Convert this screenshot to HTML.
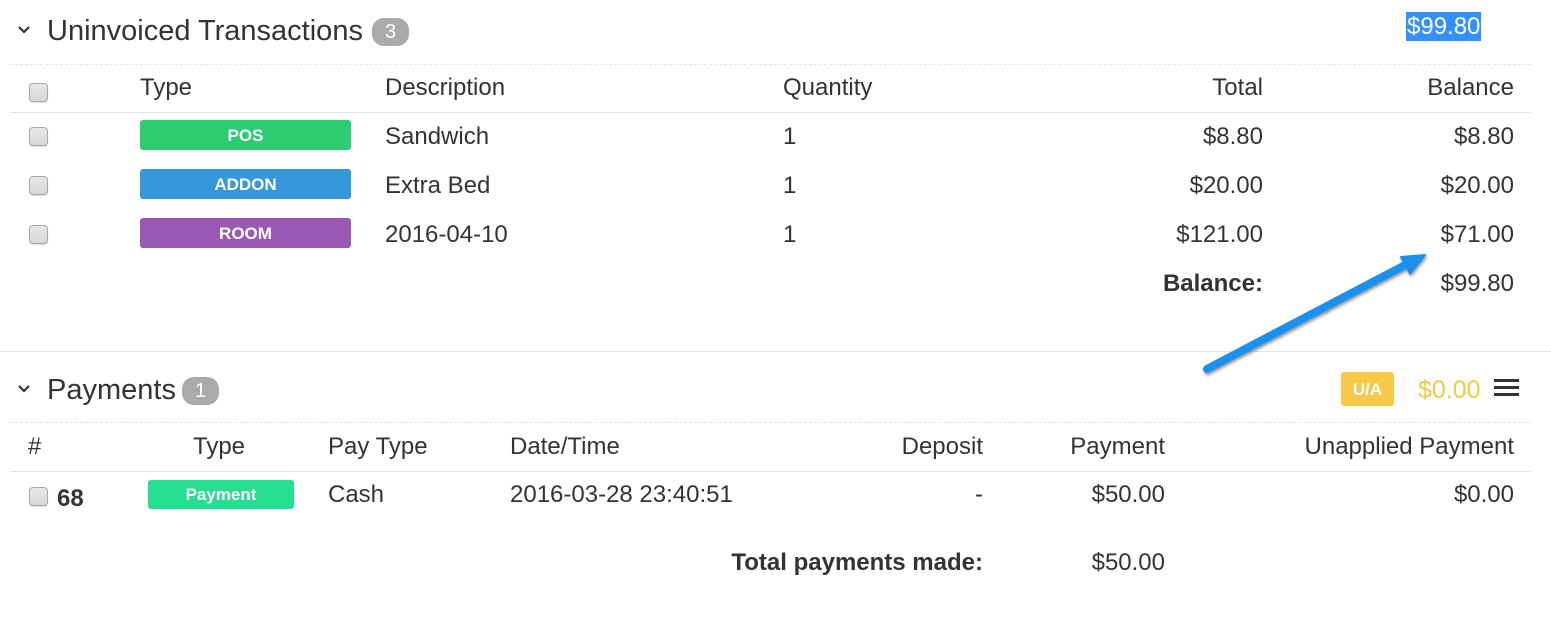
<!DOCTYPE html>
<html><head><meta charset="utf-8"><style>
body{margin:0;width:1551px;height:617px;background:#fff;position:relative;overflow:hidden;font-family:"Liberation Sans",sans-serif;color:#333;}
.t{position:absolute;font-size:24px;line-height:30px;white-space:nowrap;}
.r{text-align:right;}
.b{font-weight:bold;}
.cb{position:absolute;left:29px;width:17px;height:17px;border:1px solid #a8a8a8;border-radius:4px;background:linear-gradient(#e8e8e8,#d6d6d6);box-shadow:0 1px 1px rgba(0,0,0,.15);}
.badge{position:absolute;height:30px;line-height:31px;border-radius:3px;color:#fff;font-weight:bold;font-size:17px;text-align:center;}
.cnt{position:absolute;height:28px;line-height:28px;border-radius:12px;background:#aaa;color:#fff;font-size:20px;text-align:center;}
.hl{position:absolute;left:10px;right:20px;height:0;}
</style></head><body>
<svg style="position:absolute;left:15px;top:24px" width="18" height="12"><path d="M4 3 L9 8 L14 3" stroke="#333" stroke-width="2.2" fill="none"/></svg>
<div class="t" style="left:47px;top:14px;font-size:29px;line-height:34px">Uninvoiced Transactions</div>
<div class="cnt" style="left:372px;top:18px;width:37px">3</div>
<div class="t" style="left:1406px;top:12px;height:29px;line-height:29px;background:#3390ff;color:#fff;padding:0 1px">$99.80</div>
<div class="hl" style="top:64px;border-top:1px dashed #e6e6e6"></div>
<div class="cb" style="top:83px"></div>
<div class="t" style="left:140px;top:73px">Type</div>
<div class="t" style="left:385px;top:73px">Description</div>
<div class="t" style="left:783px;top:73px">Quantity</div>
<div class="t r" style="right:288px;top:73px">Total</div>
<div class="t r" style="right:37px;top:73px">Balance</div>
<div class="hl" style="top:112px;border-top:1px solid #e4e4e4"></div>

<div class="cb" style="top:127px"></div>
<div class="badge" style="left:140px;top:120px;width:211px;background:#2ecc71">POS</div>
<div class="t" style="left:385px;top:122px">Sandwich</div>
<div class="t" style="left:783px;top:122px">1</div>
<div class="t r" style="right:288px;top:122px">$8.80</div>
<div class="t r" style="right:37px;top:122px">$8.80</div>

<div class="cb" style="top:176px"></div>
<div class="badge" style="left:140px;top:169px;width:211px;background:#3498db">ADDON</div>
<div class="t" style="left:385px;top:171px">Extra Bed</div>
<div class="t" style="left:783px;top:171px">1</div>
<div class="t r" style="right:288px;top:171px">$20.00</div>
<div class="t r" style="right:37px;top:171px">$20.00</div>

<div class="cb" style="top:225px"></div>
<div class="badge" style="left:140px;top:218px;width:211px;background:#9b59b6">ROOM</div>
<div class="t" style="left:385px;top:220px">2016-04-10</div>
<div class="t" style="left:783px;top:220px">1</div>
<div class="t r" style="right:288px;top:220px">$121.00</div>
<div class="t r" style="right:37px;top:220px">$71.00</div>

<div class="t r b" style="right:288px;top:269px">Balance:</div>
<div class="t r" style="right:37px;top:269px">$99.80</div>

<div style="position:absolute;left:0;right:0;top:351px;border-top:1px solid #e4e4e4"></div>

<svg style="position:absolute;left:1195px;top:245px" width="245" height="135">
<defs><filter id="s"><feDropShadow dx="1" dy="2" stdDeviation="1.5" flood-opacity=".45"/></filter></defs>
<g filter="url(#s)"><line x1="12" y1="124" x2="212" y2="19" stroke="#1e90ef" stroke-width="8" stroke-linecap="round"/>
<path d="M230 10 L215 28.5 L206 12 Z" fill="#1e90ef" stroke="#1e90ef" stroke-width="2" stroke-linejoin="round"/></g></svg>

<svg style="position:absolute;left:15px;top:383px" width="18" height="12"><path d="M4 3 L9 8 L14 3" stroke="#333" stroke-width="2.2" fill="none"/></svg>
<div class="t" style="left:47px;top:373px;font-size:29px;line-height:34px">Payments</div>
<div class="cnt" style="left:182px;top:377px;width:37px">1</div>
<div class="badge" style="left:1341px;top:372px;width:53px;height:34px;line-height:35px;background:#f7c948;font-size:17px">U/A</div>
<div class="t" style="left:1418px;top:375px;color:#f5c842;font-size:25px">$0.00</div>
<div style="position:absolute;left:1494px;top:379px;width:25px;height:3px;background:#333;box-shadow:0 7px 0 #333,0 14px 0 #333"></div>
<div class="hl" style="top:422px;border-top:1px dashed #e6e6e6"></div>

<div class="t" style="left:28px;top:432px">#</div>
<div class="t" style="left:193px;top:432px">Type</div>
<div class="t" style="left:328px;top:432px">Pay Type</div>
<div class="t" style="left:510px;top:432px">Date/Time</div>
<div class="t r" style="right:568px;top:432px">Deposit</div>
<div class="t r" style="right:386px;top:432px">Payment</div>
<div class="t r" style="right:37px;top:432px">Unapplied Payment</div>
<div class="hl" style="top:471px;border-top:1px solid #e4e4e4"></div>

<div class="cb" style="top:487px"></div>
<div class="t b" style="left:57px;top:484px">68</div>
<div class="badge" style="left:148px;top:480px;width:146px;height:29px;line-height:30px;background:#26de8f">Payment</div>
<div class="t" style="left:328px;top:480px">Cash</div>
<div class="t" style="left:510px;top:480px">2016-03-28 23:40:51</div>
<div class="t r" style="right:568px;top:480px">-</div>
<div class="t r" style="right:386px;top:480px">$50.00</div>
<div class="t r" style="right:37px;top:480px">$0.00</div>

<div class="t r b" style="right:568px;top:548px">Total payments made:</div>
<div class="t r" style="right:386px;top:548px">$50.00</div>
</body></html>
